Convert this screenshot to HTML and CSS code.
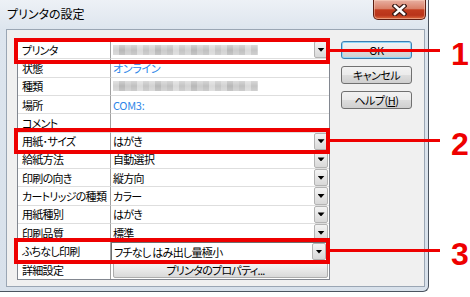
FILE: index.html
```html
<!DOCTYPE html>
<html lang="ja">
<head>
    <meta charset="utf-8">
    <link rel="stylesheet" href="styles.css">
</head>
<body>
    <div class="window">
        <div class="titlebar">
            <span class="title">プリンタの設定</span>
            <div class="close-btn">
                <svg width="15" height="12" viewBox="0 0 15 12">
                    <path d="M3 2 L12 10 M12 2 L3 10" stroke="#3b1a14" stroke-width="5" stroke-linecap="square"/>
                    <path d="M3 2 L12 10 M12 2 L3 10" stroke="#fff" stroke-width="2.6" stroke-linecap="square"/>
                </svg>
            </div>
        </div>

        <div class="client">
            <div class="props">
                <div class="label">プリンタ</div>
                <div class="value"><div class="combo"><span class="mosaic"></span><span class="drop"></span></div></div>

                <div class="label">状態</div>
                <div class="value"><span class="link">オンライン</span></div>

                <div class="label">種類</div>
                <div class="value"><span class="mosaic"></span></div>

                <div class="label">場所</div>
                <div class="value"><span class="link">COM3:</span></div>

                <div class="label">コメント</div>
                <div class="value"></div>

                <div class="label">用紙･サイズ</div>
                <div class="value"><div class="combo"><span>はがき</span><span class="drop"></span></div></div>

                <div class="label">給紙方法</div>
                <div class="value"><div class="combo"><span>自動選択</span><span class="drop"></span></div></div>

                <div class="label">印刷の向き</div>
                <div class="value"><div class="combo"><span>縦方向</span><span class="drop"></span></div></div>

                <div class="label">カートリッジの種類</div>
                <div class="value"><div class="combo"><span>カラー</span><span class="drop"></span></div></div>

                <div class="label">用紙種別</div>
                <div class="value"><div class="combo"><span>はがき</span><span class="drop"></span></div></div>

                <div class="label">印刷品質</div>
                <div class="value"><div class="combo"><span>標準</span><span class="drop"></span></div></div>

                <div class="label">ふちなし印刷</div>
                <div class="value"><div class="combo active"><span>フチなし はみ出し量極小</span><span class="drop"></span></div></div>

                <div class="label last">詳細設定</div>
                <div class="value last"><div class="prop-btn">プリンタのプロパティ...</div></div>
            </div>

            <div class="actions">
                <div class="btn default">OK</div>
                <div class="btn">キャンセル</div>
                <div class="btn">ヘルプ(<u>H</u>)</div>
            </div>
        </div>
    </div>

    <!-- callouts over the screenshot -->
    <div class="callout c1"><div class="frame"></div><div class="lead"></div><div class="num">1</div></div>
    <div class="callout c2"><div class="frame"></div><div class="lead"></div><div class="num">2</div></div>
    <div class="callout c3"><div class="frame"></div><div class="lead"></div><div class="num">3</div></div>
</body>
</html>
```

FILE: styles.css
```css
:root {
    --mark-red: #ee0000;
    --grid-line: #dedede;
    --link-blue: #2f86e8;
}

* {
    margin: 0;
    padding: 0;
    box-sizing: border-box;
}

body {
    background: #ffffff;
    font-family: "Noto Sans CJK JP", "Noto Sans", sans-serif;
    font-feature-settings: "palt";
    font-size: 11px;
    color: #000;
    position: relative;
    width: 470px;
    height: 297px;
    overflow: hidden;
}

.window {
    width: 429px;
    height: 292px;
    display: flex;
    flex-direction: column;
    background: linear-gradient(#edf1f6, #dde5ee 30px, #d8e1eb);
    border-right: 1px solid #4b5460;
    border-bottom: 1px solid #4b5460;
    border-bottom-right-radius: 6px;
}

.titlebar {
    height: 29px;
    flex: none;
    display: flex;
    align-items: flex-start;
    padding-left: 7px;
}

.title {
    font-size: 12px;
    line-height: 16px;
    margin-top: 6px;
}

.close-btn {
    margin-left: auto;
    margin-right: 2px;
    width: 53px;
    height: 20px;
    display: flex;
    justify-content: center;
    align-items: center;
    border: 1px solid #5d1e12;
    border-top: none;
    border-radius: 0 0 5px 5px;
    background: linear-gradient(#e8b0a2 0%, #d98068 45%, #c23c1e 52%, #b9341a 80%, #dd6a3f 100%);
    box-shadow: inset 0 0 0 1px rgba(255, 220, 200, 0.45);
}

.client {
    flex: 1;
    margin: 0 3px 4px 6px;
    border: 1px solid #9aa6b4;
    background: #f0f0f0;
    padding: 10px 0 0 10px;
    display: flex;
    align-items: flex-start;
}

.props {
    width: 313px;
    height: 240px;
    border: 1px solid #828790;
    background: #fff;
    display: grid;
    grid-template-columns: 93px 1fr;
    grid-template-rows: repeat(13, 1fr);
    letter-spacing: -0.7px;
}

.label,
.value {
    display: flex;
    align-items: center;
    border-bottom: 1px solid var(--grid-line);
    white-space: nowrap;
    overflow: hidden;
}

.label {
    padding-left: 4px;
    border-right: 1px solid #a0a0a0;
}

.value {
    padding-left: 2px;
}

.label.last,
.value.last {
    border-bottom: none;
}

.link {
    color: var(--link-blue);
    letter-spacing: -0.3px;
}

.mosaic {
    display: block;
    width: 145px;
    height: 10px;
    background:
        linear-gradient(rgba(255, 255, 255, 0.35), rgba(255, 255, 255, 0) 50%, rgba(255, 255, 255, 0.2)),
        repeating-linear-gradient(90deg, #d2d2d2 0 6px, #b8b8b8 6px 12px, #cbcbcb 12px 18px, #c0c0c0 18px 24px, #d9d9d9 24px 30px, #c4c4c4 30px 36px);
    filter: blur(0.6px);
}

.combo {
    display: flex;
    align-items: center;
    width: 100%;
    height: 100%;
}

.combo.active {
    margin-left: -2px;
    padding-left: 2px;
    border-top: 1px solid #6f6f6f;
    border-left: 1px solid #6f6f6f;
}

.drop {
    margin-left: auto;
    margin-right: 1px;
    width: 14px;
    height: 100%;
    display: flex;
    justify-content: center;
    align-items: center;
    border: 1px solid #b3b3b3;
    border-radius: 2px;
    background: linear-gradient(#f4f4f4, #e6e6e6 50%, #d8d8d8);
}

.drop::after {
    content: "";
    width: 7px;
    height: 4px;
    background: #000;
    clip-path: polygon(0 0, 100% 0, 50% 100%);
}

.prop-btn {
    width: 100%;
    height: 16px;
    margin-right: 1px;
    display: flex;
    justify-content: center;
    align-items: center;
    border: 1px solid #acacac;
    border-radius: 2px;
    background: linear-gradient(#f5f5f5, #e8e8e8 50%, #d9d9d9);
    padding-right: 10px;
}

.actions {
    margin-left: 11px;
    padding-top: 1px;
    display: flex;
    flex-direction: column;
    gap: 7px;
    letter-spacing: -0.5px;
}

.btn {
    width: 71px;
    height: 18px;
    display: flex;
    justify-content: center;
    align-items: center;
    border: 1px solid #707070;
    border-radius: 3px;
    background: linear-gradient(#f2f2f2 0%, #ebebeb 48%, #dddddd 52%, #cfcfcf 100%);
}

.btn.default {
    border-color: #3c7fb1;
    box-shadow: inset 0 0 0 1px #8fd6f8;
}

.btn u {
    text-decoration-thickness: 1px;
}

.callout {
    position: absolute;
    left: 14px;
    display: flex;
    align-items: flex-start;
}

.c1 { top: 38px; }
.c2 { top: 128px; }
.c3 { top: 238px; }

.frame {
    width: 316px;
    height: 26px;
    border: 4px solid var(--mark-red);
}

.lead {
    width: 110px;
    height: 3px;
    margin-top: 11px;
    background: var(--mark-red);
}

.num {
    margin-left: 11px;
    font-family: "Liberation Sans", Arial, sans-serif;
    font-weight: bold;
    font-size: 32px;
    line-height: 32px;
    color: var(--mark-red);
}
```
